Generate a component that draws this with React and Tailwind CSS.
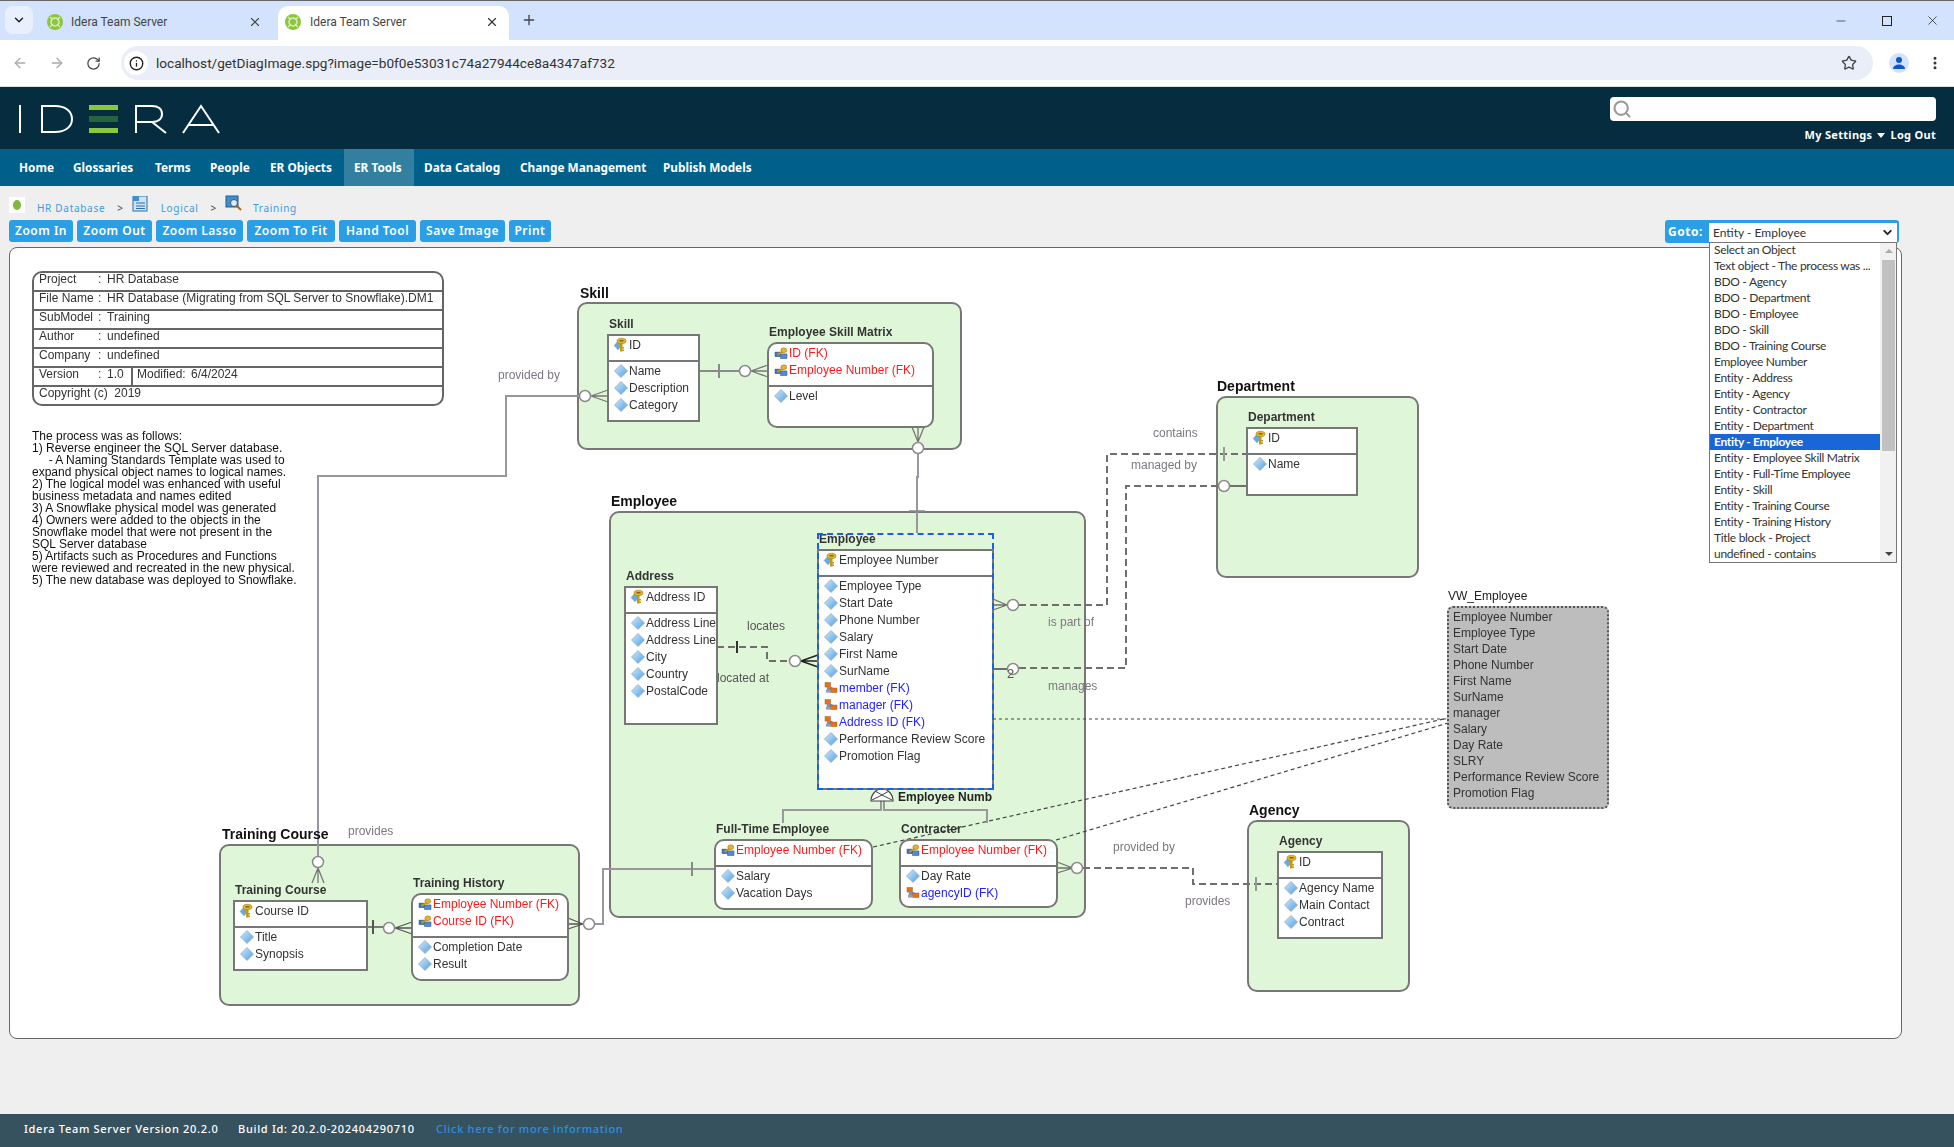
import { ArrowLeft, ArrowRight, RotateCw, Star, ChevronDown, X, Plus, Minus, Search, EllipsisVertical, Info } from "lucide-react";

const NAV = [
  ["Home", "w-[54px]"],
  ["Glossaries", "w-[82px]"],
  ["Terms", "w-[55px]"],
  ["People", "w-[60px]"],
  ["ER Objects", "w-[84px]"],
  ["ER Tools", "w-[70px] bg-[#337f9f]"],
  ["Data Catalog", "w-[96px]"],
  ["Change Management", "w-[143px]"],
  ["Publish Models", "w-[110px]"],
];

const BUTTONS = [
  ["Zoom In", "w-[64px]"],
  ["Zoom Out", "w-[75px]"],
  ["Zoom Lasso", "w-[87px]"],
  ["Zoom To Fit", "w-[88px]"],
  ["Hand Tool", "w-[77px]"],
  ["Save Image", "w-[85px]"],
  ["Print", "w-[42px]"],
];

const GOTO = [
  "Select an Object", "Text object - The process was ...", "BDO - Agency", "BDO - Department", "BDO - Employee", "BDO - Skill",
  "BDO - Training Course", "Employee Number", "Entity - Address", "Entity - Agency", "Entity - Contractor", "Entity - Department",
  "Entity - Employee", "Entity - Employee Skill Matrix", "Entity - Full-Time Employee", "Entity - Skill", "Entity - Training Course",
  "Entity - Training History", "Title block - Project", "undefined - contains",
];

const PROCESS = [
  "The process was as follows:",
  "1) Reverse engineer the SQL Server database.",
  "     - A Naming Standards Template was used to",
  "expand physical object names to logical names.",
  "2) The logical model was enhanced with useful",
  "business metadata and names edited",
  "3) A Snowflake physical model was generated",
  "4) Owners were added to the objects in the",
  "Snowflake model that were not present in the",
  "SQL Server database",
  "5) Artifacts such as Procedures and Functions",
  "were reviewed and recreated in the new physical.",
  "5) The new database was deployed to Snowflake.",
];

const VW_ROWS = ["Employee Number", "Employee Type", "Start Date", "Phone Number", "First Name", "SurName", "manager", "Salary", "Day Rate", "SLRY", "Performance Review Score", "Promotion Flag"];

// line labels on the diagram
const LINE_LABELS = [
  ["provided by", "left-[488px] top-[119px] text-[#7d7780]"],
  ["locates", "left-[737px] top-[370px] text-[#555]"],
  ["located at", "left-[707px] top-[422px] text-[#555]"],
  ["is part of", "left-[1038px] top-[366px] text-[#7d7780]"],
  ["manages", "left-[1038px] top-[430px] text-[#7d7780]"],
  ["contains", "left-[1143px] top-[177px] text-[#7d7780]"],
  ["managed by", "left-[1121px] top-[209px] text-[#7d7780]"],
  ["provided by", "left-[1103px] top-[591px] text-[#7d7780]"],
  ["provides", "left-[1175px] top-[645px] text-[#7d7780]"],
  ["provides", "left-[338px] top-[575px] text-[#7d7780]"],
];

const AREAS = [
  ["Skill", "left-[570px] top-[37px]", "left-[567px] top-[54px] w-[385px] h-[148px]"],
  ["Employee", "left-[601px] top-[245px]", "left-[599px] top-[263px] w-[477px] h-[407px]"],
  ["Department", "left-[1207px] top-[130px]", "left-[1206px] top-[148px] w-[203px] h-[182px]"],
  ["Agency", "left-[1239px] top-[554px]", "left-[1237px] top-[572px] w-[163px] h-[172px]"],
  ["Training Course", "left-[212px] top-[578px]", "left-[209px] top-[596px] w-[361px] h-[162px]"],
];

const CIRCLES = [
  [585, 396], [745, 371], [918, 448], [318, 862], [389, 928], [589, 924], [795, 661], [1013, 605], [1013, 669], [1224, 486], [1077, 868],
];

function Favicon({ x }) {
  return (
    <svg width="16" height="16" viewBox="0 0 16 16" className={x}>
      <circle cx="8" cy="8" r="8" fill="#8cc63f" />
      <circle cx="8" cy="8" r="4" fill="none" stroke="#d9eeb8" strokeWidth="1.5" />
      <path d="M3 3l3 3M13 3l-3 3M3 13l3-3M13 13l-3-3" stroke="#d9eeb8" strokeWidth="1.3" />
    </svg>
  );
}

function Logo() {
  return (
    <svg width="204" height="30" viewBox="0 0 204 30" className="ml-[18px] mt-[17px]">
      <g fill="none" stroke="#fff" strokeWidth="2">
        <path d="M2 1v28" />
        <path d="M24 2h13c10 0 17 5 17 13s-7 13-17 13H24z" />
        <path d="M118 29V2h16c6 0 10 3 10 8s-4 8-10 8h-16M134 18l14 11" />
        <path d="M165 29L183 2l18 27M171 21h24" />
      </g>
      <rect x="71" y="1" width="29" height="5" fill="#8cc63f" />
      <rect x="71" y="12" width="29" height="6" fill="#27633f" />
      <rect x="71" y="24" width="29" height="5" fill="#8cc63f" />
    </svg>
  );
}

function DiamondIcon() {
  return (
    <svg width="12" height="12" viewBox="0 0 12 12" className="shrink-0 overflow-visible">
      <defs>
        <linearGradient id="dia" x1="0" y1="0" x2="1" y2="1">
          <stop offset="0" stopColor="#d4ebfc" />
          <stop offset="1" stopColor="#4a9fe6" />
        </linearGradient>
      </defs>
      <polygon points="6,-0.5 12.500,6 6,12.500 -0.5,6" fill="url(#dia)" stroke="#9aa8b3" strokeWidth="0.8" />
    </svg>
  );
}

function KeyIcon() {
  return (
    <svg width="12" height="14" viewBox="0 0 12 14" className="shrink-0 overflow-visible">
      <polygon points="3,3 7,7.500 3,12 -1,7.500" fill="#6aa9e0" stroke="#8aa" strokeWidth="0.4" />
      <rect x="5" y="4" width="2.5" height="9.500" fill="#c49a12" />
      <rect x="7" y="9" width="2" height="1.500" fill="#c49a12" />
      <rect x="7" y="11.500" width="2" height="1.500" fill="#c49a12" />
      <ellipse cx="6.500" cy="3" rx="4.500" ry="2.700" fill="#e3b52a" stroke="#9b7a10" strokeWidth="0.6" />
      <rect x="4.500" y="2.200" width="4" height="1.200" fill="#6a5208" />
    </svg>
  );
}

function FkKeyIcon() {
  return (
    <svg width="12" height="12" viewBox="0 0 13 12" className="shrink-0 overflow-visible">
      <rect x="0" y="5" width="6" height="5" fill="#3f76c4" stroke="#274c86" strokeWidth="0.5" />
      <rect x="6" y="7" width="7" height="5" fill="#4f8ad8" stroke="#274c86" strokeWidth="0.5" />
      <rect x="2" y="5" width="8" height="2" fill="#c49a12" transform="rotate(-30 6 6)" />
      <ellipse cx="9.500" cy="3" rx="3.200" ry="2.600" fill="#e3b52a" stroke="#8f7010" strokeWidth="0.5" />
    </svg>
  );
}

function FkIcon() {
  return (
    <svg width="12" height="12" viewBox="0 0 13 12" className="shrink-0 overflow-visible">
      <rect x="0" y="0" width="6" height="5" fill="#e8701a" stroke="#9a4a10" strokeWidth="0.4" />
      <rect x="2" y="5" width="6" height="4" fill="#7d8fa3" />
      <rect x="6" y="6" width="7" height="5" fill="#e8701a" stroke="#9a4a10" strokeWidth="0.4" />
      <rect x="1" y="8" width="5" height="3" fill="#8fa1b5" />
    </svg>
  );
}

function Row({ text, kind }) {
  const color = kind === "fkk" ? "text-[#ff1a1a]" : kind === "ref" ? "text-[#2222ff]" : "text-[#333]";
  return (
    <div className={`flex items-center gap-[2px] h-[17px] pl-[6px] whitespace-nowrap ${color}`}>
      {kind === "pk" && <KeyIcon />}
      {kind === "fkk" && <FkKeyIcon />}
      {kind === "attr" && <DiamondIcon />}
      {kind === "ref" && <FkIcon />}
      <span>{text}</span>
    </div>
  );
}

function Entity({ label, keys, attrs, pos, box, round }) {
  return (
    <div className={`absolute ${pos}`}>
      <div className="h-[16px] pl-[2px] mb-[2px] leading-[16px] font-bold text-[#333] whitespace-nowrap">{label}</div>
      <div className={`bg-white border-2 border-[#777] overflow-hidden ${box} ${round ? "rounded-[10px]" : ""}`}>
        <div className="pb-[7px] border-b-2 border-[#777]">
          {keys.map((r) => (
            <Row key={r[0]} text={r[0]} kind={r[1]} />
          ))}
        </div>
        {attrs.map((r, i) => (
          <Row key={r[0] + i} text={r[0]} kind={r[1]} />
        ))}
      </div>
    </div>
  );
}

function Connectors() {
  return (
    <svg width="1891" height="790" viewBox="10 248 1891 790" className="absolute left-0 top-0" fill="none">
      {/* relationship lines, solid */}
      <g stroke="#9b95a0" strokeWidth="2">
        <path d="M318 856V476H506V396H579" />
        <path d="M318 868L312 883M318 868L324 883M318 868V883" strokeWidth="1.3" stroke="#777" />
        <path d="M591 396L608 390M591 396L608 402M591 396H608" strokeWidth="1.3" stroke="#777" />
        <path d="M699 371H739" stroke="#8a8a8a" />
        <path d="M719 364V378" stroke="#8a8a8a" />
        <path d="M751 371L768 365M751 371L768 377M751 371H768" strokeWidth="1.3" stroke="#777" />
        <path d="M918 442L912 427M918 442L924 427M918 427V442" strokeWidth="1.3" stroke="#777" />
        <path d="M918 454V477H917V533" />
        <path d="M909 511H925" stroke="#8a8a8a" strokeWidth="1.500" />
        <path d="M595 924H603V869H715" />
        <path d="M692 862V876" stroke="#8a8a8a" />
        <path d="M583 924L568 918M583 924L568 929M583 924H568" strokeWidth="1.3" stroke="#555" />
      </g>
      <g stroke="#555">
        <path d="M367 927H383" strokeWidth="1.500" />
        <path d="M373 920V934" strokeWidth="2" />
        <path d="M395 928L412 922M395 928L412 934M395 928H412" strokeWidth="1.3" />
      </g>
      {/* non identifying, dashed */}
      <g stroke="#6f6f6f" strokeWidth="2">
        <path d="M717 647H767V661H789" strokeDasharray="7 4" />
        <path d="M737 641V653" stroke="#333" />
        <path d="M801 661L818 655M801 661L818 667M801 661H818" stroke="#222" strokeWidth="1.500" />
        <path d="M1019 605H1107V454H1247" strokeDasharray="7 4" />
        <path d="M1224 447V461" stroke="#999" />
        <path d="M1007 605L993 599M1007 605L993 610M1007 605H993" strokeWidth="1.3" />
        <path d="M993 669H1007" />
        <path d="M1019 668H1126V486H1218" strokeDasharray="7 4" />
        <path d="M1230 486H1247" />
        <path d="M1073 868L1057 862M1073 868L1057 873M1073 868H1057" strokeWidth="1.3" />
        <path d="M1083 868H1193V884H1278" strokeDasharray="7 4" />
        <path d="M1256 877V891" stroke="#999" />
      </g>
      {/* view links */}
      <g stroke="#444" strokeWidth="1.200">
        <path d="M993 719H1448" strokeDasharray="3 3" />
        <path d="M873 847L1448 718" strokeDasharray="4 3" />
        <path d="M1056 840L1448 723" strokeDasharray="4 3" />
      </g>
      {/* subtype */}
      <path d="M881 801V810H783V823M884 801V810H987V823" stroke="#999" strokeWidth="2" />
      <path d="M871 801A11 12 0 0 1 893 801Z" fill="#fff" stroke="#444" strokeWidth="1.200" />
      <path d="M872 800L882 795L892 800M875 791L882 795L889 791" stroke="#444" strokeWidth="1" />
      {CIRCLES.map(([cx, cy]) => (
        <circle key={cx + "-" + cy} cx={cx} cy={cy} r="5.500" fill="#fff" stroke="#8b8b8b" strokeWidth="1.500" />
      ))}
    </svg>
  );
}

function TitleBlock() {
  const rows = [
    ["Project", "HR Database"],
    ["File Name", "HR Database (Migrating from SQL Server to Snowflake).DM1"],
    ["SubModel", "Training"],
    ["Author", "undefined"],
    ["Company", "undefined"],
  ];
  return (
    <div className="absolute left-[22px] top-[23px] w-[412px] h-[135px] border-2 border-[#666] rounded-[10px] overflow-hidden leading-[12px] text-[#333]">
      {rows.map((r) => (
        <div key={r[0]} className="flex items-start h-[19px] pl-[5px] border-b-2 border-[#666]">
          <span className="w-[59px]">{r[0]}</span>
          <span className="w-[9px]">:</span>
          <span className="whitespace-nowrap">{r[1]}</span>
        </div>
      ))}
      <div className="flex items-start h-[19px] pl-[5px] border-b-2 border-[#666]">
        <span className="w-[59px]">Version</span>
        <span className="w-[9px]">:</span>
        <span className="w-[26px] h-full border-r-2 border-[#666]">1.0</span>
        <span className="w-[54px] ml-[4px]">Modified:</span>
        <span>6/4/2024</span>
      </div>
      <div className="pl-[5px]">Copyright (c)&nbsp; 2019</div>
    </div>
  );
}

function Diagram() {
  return (
    <div className="relative ml-[9px] mt-[4px] w-[1893px] h-[792px] bg-white border border-[#666] rounded-[8px] font-['Liberation_Sans',sans-serif] text-[12px]">
      <div className="absolute inset-0 blur-[0.3px]">
        {AREAS.map((a) => (
          <div key={a[0]} className={`absolute bg-[#e0f6d9] border-2 border-[#777] rounded-[10px] ${a[2]}`} />
        ))}
        <Connectors />
        {AREAS.map((a) => (
          <div key={a[0]} className={`absolute text-[14px] leading-[16px] font-bold text-[#111] whitespace-nowrap ${a[1]}`}>
            {a[0]}
          </div>
        ))}
        <TitleBlock />
        <div className="absolute left-[22px] top-[182px] leading-[12px] text-[#111] whitespace-pre">
          {PROCESS.map((l, i) => (
            <div key={i}>{l}</div>
          ))}
        </div>
        {LINE_LABELS.map((l) => (
          <div key={l[1]} className={`absolute leading-[16px] whitespace-nowrap ${l[1]}`}>
            {l[0]}
          </div>
        ))}

        <Entity label="Skill" pos="left-[597px] top-[68px]" box="w-[93px] h-[88px]" keys={[["ID", "pk"]]}
          attrs={[["Name", "attr"], ["Description", "attr"], ["Category", "attr"]]} />
        <Entity label="Employee Skill Matrix" round pos="left-[757px] top-[76px]" box="w-[167px] h-[86px]"
          keys={[["ID (FK)", "fkk"], ["Employee Number (FK)", "fkk"]]} attrs={[["Level", "attr"]]} />
        <Entity label="Address" pos="left-[614px] top-[320px]" box="w-[94px] h-[139px]" keys={[["Address ID", "pk"]]}
          attrs={[["Address Line", "attr"], ["Address Line", "attr"], ["City", "attr"], ["Country", "attr"], ["PostalCode", "attr"]]} />
        <Entity label="Employee" pos="left-[807px] top-[283px]" box="w-[177px] h-[241px]" keys={[["Employee Number", "pk"]]}
          attrs={[["Employee Type", "attr"], ["Start Date", "attr"], ["Phone Number", "attr"], ["Salary", "attr"], ["First Name", "attr"], ["SurName", "attr"],
            ["member (FK)", "ref"], ["manager (FK)", "ref"], ["Address ID (FK)", "ref"], ["Performance Review Score", "attr"], ["Promotion Flag", "attr"]]} />
        <div className="absolute left-[807px] top-[285px] w-[177px] h-[257px] border-2 border-dashed border-[#1a5fe8]" />
        <div className="absolute left-[888px] top-[541px] leading-[16px] font-bold text-[#222] whitespace-nowrap">Employee Numb</div>
        <Entity label="Full-Time Employee" round pos="left-[704px] top-[573px]" box="w-[159px] h-[71px]" keys={[["Employee Number (FK)", "fkk"]]}
          attrs={[["Salary", "attr"], ["Vacation Days", "attr"]]} />
        <Entity label="Contracter" round pos="left-[889px] top-[573px]" box="w-[159px] h-[69px]" keys={[["Employee Number (FK)", "fkk"]]}
          attrs={[["Day Rate", "attr"], ["agencyID (FK)", "ref"]]} />
        <Entity label="Department" pos="left-[1236px] top-[161px]" box="w-[112px] h-[69px]" keys={[["ID", "pk"]]} attrs={[["Name", "attr"]]} />
        <Entity label="Agency" pos="left-[1267px] top-[585px]" box="w-[106px] h-[88px]" keys={[["ID", "pk"]]}
          attrs={[["Agency Name", "attr"], ["Main Contact", "attr"], ["Contract", "attr"]]} />
        <Entity label="Training Course" pos="left-[223px] top-[634px]" box="w-[135px] h-[71px]" keys={[["Course ID", "pk"]]}
          attrs={[["Title", "attr"], ["Synopsis", "attr"]]} />
        <Entity label="Training History" round pos="left-[401px] top-[627px]" box="w-[158px] h-[88px]"
          keys={[["Employee Number (FK)", "fkk"], ["Course ID (FK)", "fkk"]]} attrs={[["Completion Date", "attr"], ["Result", "attr"]]} />

        <div className="absolute left-[997px] top-[418px] text-[13px] leading-[16px] text-[#555]">2</div>

        <div className="absolute left-[1438px] top-[340px] leading-[16px] text-[#222]">VW_Employee</div>
        <div className="absolute left-[1437px] top-[358px] w-[162px] h-[203px] pt-[1px] pl-[4px] bg-[#bdbdbd] border-2 border-dotted border-[#555] rounded-[6px] text-[#333]">
          {VW_ROWS.map((r) => (
            <div key={r} className="h-[16px] leading-[16px] whitespace-nowrap">{r}</div>
          ))}
        </div>
      </div>
    </div>
  );
}

function BrowserChrome() {
  return (
    <div className="font-['Roboto',sans-serif] text-[#444]">
      <div className="flex items-end h-[40px] bg-[#d3e3fd] border-t border-[#666]">
        <div className="flex items-center justify-center ml-[5px] mb-[6px] w-[28px] h-[28px] bg-[#e8f0fe] rounded-[8px]">
          <ChevronDown size={14} strokeWidth={2.500} className="text-[#222]" />
        </div>
        <div className="flex items-center w-[245px] h-[34px] pb-[3px] text-[12px]">
          <Favicon x="ml-[14px]" />
          <span className="ml-[8px] w-[177px]">Idera Team Server</span>
          <X size={14} className="text-[#444]" />
        </div>
        <div className="flex items-center w-[231px] h-[34px] pb-[3px] bg-white rounded-t-[10px] text-[12px]">
          <Favicon x="ml-[7px]" />
          <span className="ml-[9px] w-[175px]">Idera Team Server</span>
          <X size={14} className="text-[#333]" />
        </div>
        <Plus size={16} className="ml-[12px] mb-[12px] text-[#444]" />
        <div className="ml-auto flex items-center mb-[12px] text-[#222]">
          <Minus size={14} strokeWidth={1.200} className="mr-[34px]" />
          <div className="w-[10px] h-[10px] border border-[#222] mr-[33px]" />
          <X size={15} strokeWidth={1.200} className="mr-[14px]" />
        </div>
      </div>
      <div className="flex items-center h-[47px] bg-white border-b border-[#ddd]">
        <ArrowLeft size={16} className="ml-[12px] text-[#aaa]" />
        <ArrowRight size={16} className="ml-[21px] text-[#aaa]" />
        <RotateCw size={15} className="ml-[21px] text-[#444]" />
        <div className="flex items-center ml-[20px] w-[1752px] h-[34px] bg-[#e9eef8] rounded-full">
          <div className="flex items-center justify-center ml-[3px] w-[24px] h-[24px] bg-white rounded-full">
            <Info size={15} strokeWidth={2.200} className="text-[#222]" />
          </div>
          <span className="ml-[8px] text-[13.600px] text-[#333]">localhost/getDiagImage.spg?image=b0f0e53031c74a27944ce8a4347af732</span>
          <Star size={16} strokeWidth={2} className="ml-auto mr-[16px] text-[#444]" />
        </div>
        <div className="flex items-center justify-center ml-[16px] w-[20px] h-[20px] bg-[#d3e3fd] rounded-full">
          <svg width="14" height="14" viewBox="0 0 14 14" fill="#0b57d0">
            <circle cx="7" cy="4" r="3" />
            <path d="M1 13c0-3 3-4.500 6-4.500s6 1.500 6 4.500z" />
          </svg>
        </div>
        <EllipsisVertical size={16} strokeWidth={2.500} className="ml-[18px] text-[#333]" />
      </div>
    </div>
  );
}

function GotoList() {
  return (
    <div className="absolute left-[1709px] top-[22px] z-10 flex w-[188px] h-[321px] overflow-hidden bg-white border border-[#767676] font-['Lato',sans-serif] text-[12px] tracking-[-0.3px] text-[#333]">
      <div className="w-[170px] -mt-[1px]">
        {GOTO.map((g) => (
          <div key={g} className={`h-[16px] pl-[4px] leading-[16px] whitespace-nowrap ${g === "Entity - Employee" ? "bg-[#1a66d6] text-white font-bold" : ""}`}>
            {g}
          </div>
        ))}
      </div>
      <div className="relative flex-1 bg-[#f1f1f1]">
        <div className="absolute left-[5px] top-[6px] w-0 h-0 border-x-[4px] border-x-transparent border-b-[4px] border-b-[#aaa]" />
        <div className="absolute left-[2px] top-[17px] w-[13px] h-[191px] bg-[#c1c1c1]" />
        <div className="absolute left-[5px] bottom-[6px] w-0 h-0 border-x-[4px] border-x-transparent border-t-[4px] border-t-[#444]" />
      </div>
    </div>
  );
}

export default function App() {
  return (
    <div className="flex flex-col w-[1954px] h-[1147px] overflow-hidden bg-[#efefef] font-['Noto_Sans',sans-serif]">
      <BrowserChrome />

      {/* app header */}
      <div className="flex justify-between h-[62px] bg-[#062c40]">
        <Logo />
        <div className="flex flex-col items-end mr-[18px] pt-[10px]">
          <div className="flex items-center w-[326px] h-[24px] pl-[2px] bg-white rounded-[4px]">
            <Search size={20} strokeWidth={2.500} className="text-[#999]" />
          </div>
          <div className="flex items-center mt-[6px] text-[11px] font-bold tracking-[0.3px] text-white">
            <span>My Settings</span>
            <span className="mx-[5px] w-0 h-0 border-x-[4px] border-x-transparent border-t-[5px] border-t-white" />
            <span>Log Out</span>
          </div>
        </div>
      </div>

      <nav className="flex h-[37px] pl-[9px] bg-[#00608a] text-[11.800px] font-bold text-white">
        {NAV.map((n) => (
          <div key={n[0]} className={`flex items-center pl-[10px] whitespace-nowrap ${n[1]}`}>{n[0]}</div>
        ))}
      </nav>

      <div className="flex items-end h-[34px] pb-[4px] text-[10px] tracking-[0.7px] text-[#3a9ce0]">
        <div className="flex items-center justify-center ml-[9px] mb-[3px] w-[16px] h-[16px] bg-white">
          <svg width="10" height="12" viewBox="0 0 10 12"><ellipse cx="5" cy="6" rx="4" ry="5" fill="#7fb83a" /></svg>
        </div>
        <span className="ml-[12px]">HR Database</span>
        <span className="ml-[12px] text-[#444]">&gt;</span>
        <svg width="16" height="16" viewBox="0 0 16 16" className="ml-[8px] mb-[4px]">
          <rect x="1" y="0" width="14" height="15" fill="#cfe4f5" stroke="#2a6fa8" />
          <rect x="1" y="0" width="6" height="5" fill="#3f8fd0" />
          <path d="M4 7h9M4 10h9M4 12.500h9" stroke="#2a6fa8" />
        </svg>
        <span className="ml-[13px]">Logical</span>
        <span className="ml-[12px] text-[#444]">&gt;</span>
        <svg width="18" height="17" viewBox="0 0 18 17" className="ml-[8px] mb-[4px]">
          <rect x="1" y="1" width="12" height="11" fill="#3f8fd0" stroke="#1f5f94" />
          <circle cx="9" cy="8" r="3.500" fill="#d8ecfa" stroke="#555" />
          <path d="M12 11l4 4" stroke="#b5651d" strokeWidth="2" />
        </svg>
        <span className="ml-[10px]">Training</span>
      </div>

      <div className="relative flex h-[23px]">
        <div className="flex gap-[4px] ml-[9px]">
          {BUTTONS.map((b) => (
            <div key={b[0]} className={`flex items-center justify-center h-[22px] bg-[#2a9fe5] rounded-[3px] text-[12px] font-semibold tracking-[0.5px] text-white ${b[1]}`}>
              {b[0]}
            </div>
          ))}
        </div>
        <div className="flex items-center ml-auto mr-[55px] w-[234px] h-[23px] bg-[#2a9fe5] rounded-[3px]">
          <span className="ml-[3px] w-[41px] text-[12px] font-bold tracking-[0.5px] text-white">Goto:</span>
          <div className="flex items-center justify-between w-[188px] h-[19px] mt-[2px] pl-[4px] pr-[3px] bg-white font-['Lato',sans-serif] text-[12px] text-[#333]">
            <span>Entity - Employee</span>
            <ChevronDown size={13} strokeWidth={3.500} className="text-[#222]" />
          </div>
        </div>
        <GotoList />
      </div>

      <Diagram />

      <footer className="flex items-center mt-auto h-[33px] pb-[2px] pl-[24px] bg-[#37525f] text-[11px] font-medium tracking-[0.7px] text-white">
        <span className="w-[214px]">Idera Team Server Version 20.2.0</span>
        <span className="w-[198px]">Build Id: 20.2.0-202404290710</span>
        <span className="text-[#2a8fe0]">Click here for more information</span>
      </footer>
    </div>
  );
}
